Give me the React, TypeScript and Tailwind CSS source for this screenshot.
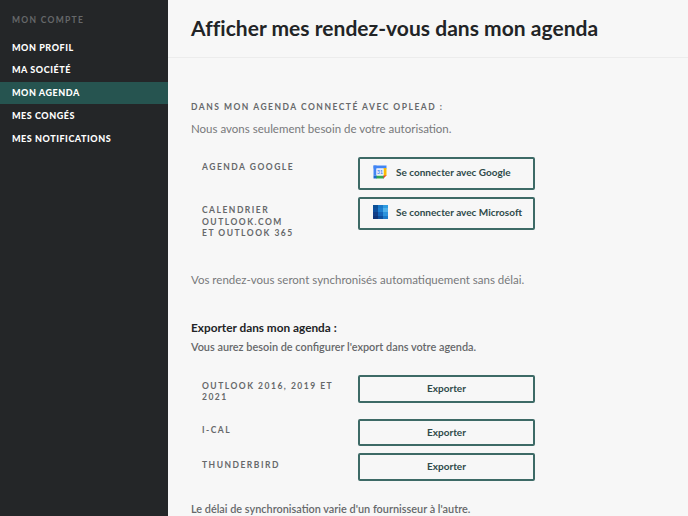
const font = "font-['Lato','Noto_Sans',sans-serif]";

function GoogleCal() {
  return (
    <svg width="14" height="14" viewBox="0 0 14 14">
      <rect x="0.5" y="0.5" width="13" height="13" rx="1" fill="#fff" />
      <rect x="0.5" y="0.5" width="3" height="10" fill="#4285f4" />
      <rect x="0.5" y="0.5" width="13" height="3" fill="#4285f4" />
      <rect x="10.5" y="3" width="3" height="8" fill="#fbbc04" />
      <rect x="3" y="10.5" width="8" height="3" fill="#34a853" />
      <rect x="0.5" y="10.5" width="3" height="3" fill="#1967d2" />
      <path d="M10.5 10.5h3l-3 3z" fill="#ea4335" />
      <rect x="3.5" y="3.5" width="7" height="7" fill="#e8eefa" />
      <text x="7" y="9" textAnchor="middle" fontSize="5" fontWeight="700" fill="#4285f4">31</text>
    </svg>
  );
}

function MsCal() {
  return (
    <svg width="15" height="14" viewBox="0 0 15 14">
      <rect width="15" height="14" rx="1" fill="#0f5ea8" />
      <rect x="0" y="0" width="5" height="3" fill="#0a4f96" />
      <rect x="5" y="0" width="5" height="3" fill="#1a78c8" />
      <rect x="10" y="0" width="5" height="3" fill="#2f9be0" />
      <rect x="0" y="3" width="5" height="4" fill="#0f4f9c" />
      <rect x="5" y="3" width="5" height="4" fill="#1e80d0" />
      <rect x="10" y="3" width="5" height="4" fill="#4fb0ea" />
      <rect x="0" y="7" width="5" height="4" fill="#123f88" />
      <rect x="5" y="7" width="5" height="4" fill="#1565b8" />
      <rect x="10" y="7" width="5" height="4" fill="#2c93dc" />
      <rect x="0" y="11" width="5" height="3" fill="#103578" />
      <rect x="5" y="11" width="5" height="3" fill="#0f4f9c" />
      <rect x="10" y="11" width="5" height="3" fill="#1a78c8" />
    </svg>
  );
}

function NavItem({ label, active }: { label: string; active?: boolean }) {
  return (
    <div
      className={`flex h-[22.75px] items-center pl-3 text-[9px] font-black tracking-[0.55px] text-white ${
        active ? "bg-[#265450]" : ""
      }`}
    >
      {label}
    </div>
  );
}

function Label({ children, className = "" }: { children: React.ReactNode; className?: string }) {
  return (
    <div className={`w-[167px] shrink-0 pl-[11px] text-[8.5px] font-bold leading-[11.5px] tracking-[1.5px] text-[#66686a] ${className}`}>
      {children}
    </div>
  );
}

function ConnectButton({ icon, label, className = "" }: { icon: React.ReactNode; label: string; className?: string }) {
  return (
    <div className={`flex h-[33px] w-[177px] items-center rounded-[2px] border-2 border-[#3d6a66] pl-[13px] pb-[3px] ${className}`}>
      <div className="flex w-[23px] shrink-0 items-center">{icon}</div>
      <span className="text-[10px] font-bold text-[#2f4a4a]">{label}</span>
    </div>
  );
}

function ExportButton({ className = "" }: { className?: string }) {
  return (
    <div className={`flex w-[177px] items-center justify-center rounded-[2px] border-2 border-[#3d6a66] text-[10px] font-bold text-[#2f4a4a] ${className}`}>
      Exporter
    </div>
  );
}

export default function App() {
  return (
    <div className={`flex h-[516px] w-[688px] overflow-hidden bg-[#f7f7f7] ${font}`}>
      <aside className="h-full w-[168px] shrink-0 bg-[#242628]">
        <div className="pl-3 pt-[14px] pb-[9px] text-[8.5px] font-bold leading-[12px] tracking-[1.3px] text-[#66686a]">
          MON COMPTE
        </div>
        <div className="pt-[1px]">
          <NavItem label="MON PROFIL" />
          <NavItem label="MA SOCIÉTÉ" />
          <NavItem label="MON AGENDA" active />
          <NavItem label="MES CONGÉS" />
          <NavItem label="MES NOTIFICATIONS" />
        </div>
      </aside>
      <main className="min-w-0 flex-1">
        <header className="flex h-[58px] items-center border-b border-[#ececec] pb-[2px] pl-[23px]">
          <h1 className="text-[21px] font-bold leading-none tracking-[0.03px] text-[#222426]">
            Afficher mes rendez-vous dans mon agenda
          </h1>
        </header>
        <div className="pl-[23px] pt-[43px]">
          <div className="text-[8.5px] font-bold leading-[12px] tracking-[1.5px] text-[#66686a]">
            DANS MON AGENDA CONNECTÉ AVEC OPLEAD :
          </div>
          <p className="mt-[8px] text-[11.5px] leading-[16px] text-[#77797b]">
            Nous avons seulement besoin de votre autorisation.
          </p>
          <div className="mt-[20px] flex items-start">
            <Label className="pt-[5px]">AGENDA GOOGLE</Label>
            <ConnectButton icon={<GoogleCal />} label="Se connecter avec Google" />
          </div>
          <div className="mt-[7px] flex items-start">
            <Label className="pt-[8px]">
              CALENDRIER
              <br />
              OUTLOOK.COM
              <br />
              ET OUTLOOK 365
            </Label>
            <ConnectButton icon={<MsCal />} label="Se connecter avec Microsoft" />
          </div>
          <p className="mt-[32px] text-[11.5px] leading-[16px] text-[#77797b]">
            Vos rendez-vous seront synchronisés automatiquement sans délai.
          </p>
          <h2 className="mt-[32px] text-[11.8px] font-bold leading-[16px] text-[#222426]">
            Exporter dans mon agenda :
          </h2>
          <p className="mt-[3px] text-[10.9px] font-semibold leading-[16px] text-[#66686a]">
            Vous aurez besoin de configurer l'export dans votre agenda.
          </p>
          <div className="mt-[20px] flex items-start">
            <Label className="pt-[6px] leading-[9.5px]">
              OUTLOOK 2016, 2019 ET
              <br />
              2021
            </Label>
            <ExportButton className="h-[28px]" />
          </div>
          <div className="mt-[15px] flex items-start">
            <Label className="pt-[6px]">I-CAL</Label>
            <ExportButton className="h-[27px]" />
          </div>
          <div className="mt-[7px] flex items-start">
            <Label className="pt-[7px]">THUNDERBIRD</Label>
            <ExportButton className="h-[28px]" />
          </div>
          <p className="mt-[20px] text-[10.9px] font-semibold leading-[16px] text-[#66686a]">
            Le délai de synchronisation varie d'un fournisseur à l'autre.
          </p>
        </div>
      </main>
    </div>
  );
}
